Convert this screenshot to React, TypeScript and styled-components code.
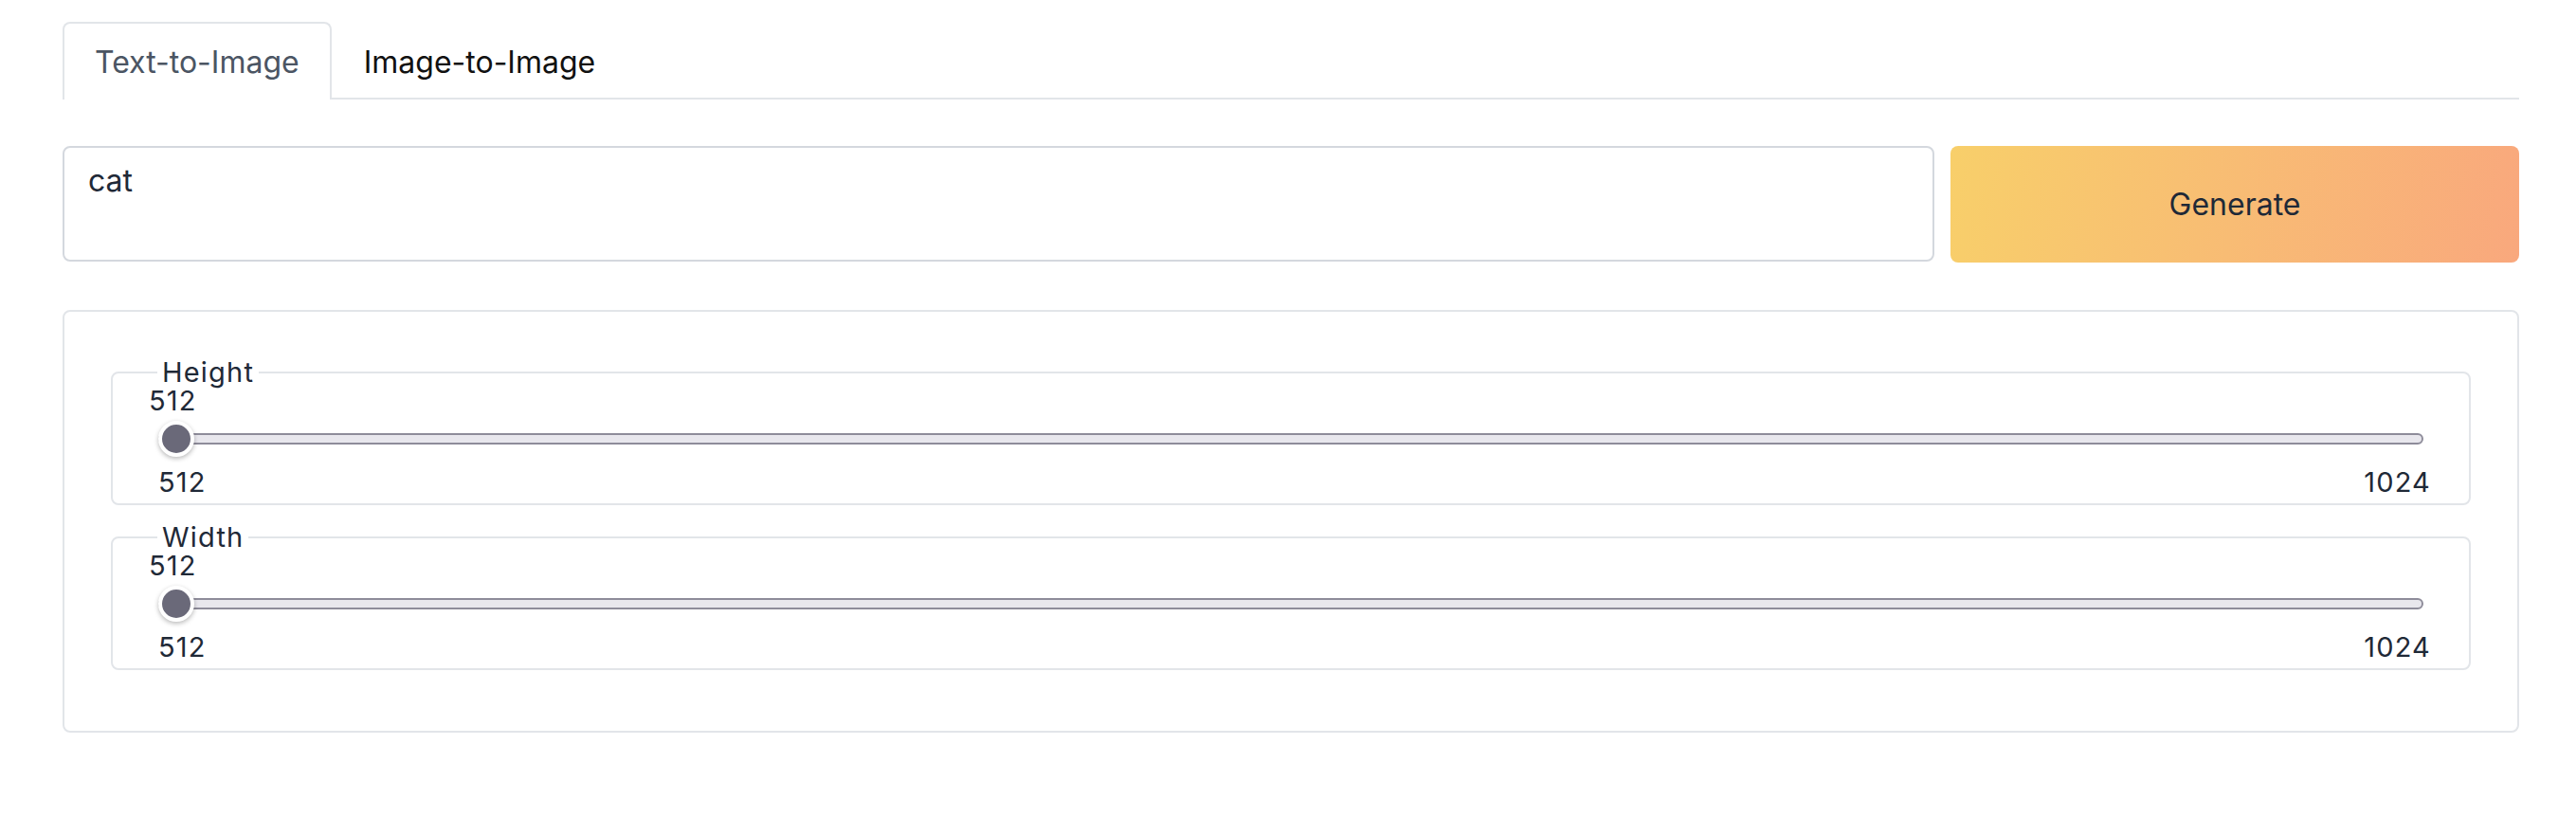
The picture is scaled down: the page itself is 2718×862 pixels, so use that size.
import React from "react";
import styled, { createGlobalStyle } from "styled-components";

const GlobalStyle = createGlobalStyle`
  html, body {
    margin: 0;
    padding: 0;
    background: #ffffff;
  }
  body {
    font-family: "Inter", "Noto Sans", "Liberation Sans", sans-serif;
    color: #1f2937;
  }
  * { box-sizing: border-box; }
`;

const Page = styled.div`
  padding: 23px 60px 0 66px;
`;

const TabBar = styled.div`
  display: flex;
  border-bottom: 2px solid #e2e5e9;
`;

const Tab = styled.button<{ $active?: boolean }>`
  height: 82px;
  margin-bottom: -2px;
  padding: 0 32px;
  border: 2px solid ${(p) => (p.$active ? "#e2e5e9" : "transparent")};
  border-bottom: none;
  border-radius: 8px 8px 0 0;
  background: ${(p) => (p.$active ? "#ffffff" : "transparent")};
  font-family: inherit;
  font-size: 32px;
  color: ${(p) => (p.$active ? "#4b5563" : "#111111")};
  cursor: pointer;
`;

const PromptRow = styled.div`
  display: flex;
  gap: 17px;
  margin-top: 49px;
`;

const Prompt = styled.textarea`
  flex: 1;
  height: 122px;
  padding: 11px 25px;
  border: 2px solid #d4d8de;
  border-radius: 8px;
  font-family: inherit;
  font-size: 32px;
  line-height: 48px;
  color: #1f2937;
  resize: none;
  outline: none;
`;

const GenerateButton = styled.button`
  width: 600px;
  height: 123px;
  border: none;
  border-radius: 8px;
  background: linear-gradient(100deg, #f8cf6a 0%, #f8bc74 50%, #f9a87d 100%);
  font-family: inherit;
  font-size: 32px;
  color: #1f2937;
  cursor: pointer;
`;

const Settings = styled.div`
  display: flex;
  flex-direction: column;
  gap: 17px;
  margin-top: 50px;
  padding: 47px 49px 64px;
  border: 2px solid #e2e5e9;
  border-radius: 8px;
`;

const Field = styled.fieldset`
  margin: 0;
  min-width: 0;
  padding: 0 48px 9px;
  border: 2px solid #e2e5e9;
  border-radius: 8px;
`;

const Legend = styled.legend`
  padding: 0 5px;
  margin-left: -1px;
  font-size: 29px;
  letter-spacing: 1.2px;
  line-height: 34px;
  color: #1f2937;
`;

const ValueRow = styled.div`
  position: relative;
  height: 26px;
`;

const ValueLabel = styled.span`
  position: absolute;
  top: 0;
  margin-left: -10px;
  font-size: 29px;
  letter-spacing: 1.2px;
  line-height: 26px;
  color: #1f2937;
`;

const TrackArea = styled.div`
  position: relative;
  display: flex;
  align-items: center;
  height: 38px;
  margin-top: 8px;
`;

const Track = styled.div`
  flex: 1;
  height: 12px;
  border: 2px solid #8e8c9a;
  border-radius: 6px;
  background: #e8e7ed;
`;

const Thumb = styled.div`
  position: absolute;
  top: 0;
  width: 38px;
  height: 38px;
  border: 4px solid #ffffff;
  border-radius: 50%;
  background: #6a6979;
  box-shadow: 0 2px 5px rgba(0, 0, 0, 0.28);
`;

const RangeLabels = styled.div`
  display: flex;
  justify-content: space-between;
  margin-top: 14px;
  margin-right: -8px;
  font-size: 29px;
  letter-spacing: 1.2px;
  line-height: 26px;
  color: #1f2937;
`;

type SliderProps = { label: string; value: number; min: number; max: number };

function Slider({ label, value, min, max }: SliderProps) {
  const pct = ((value - min) / (max - min)) * 100;
  return (
    <Field>
      <Legend>{label}</Legend>
      <ValueRow>
        <ValueLabel style={{ left: `${pct}%` }}>{value}</ValueLabel>
      </ValueRow>
      <TrackArea>
        <Track />
        <Thumb style={{ left: `calc(${pct}% - ${(pct / 100) * 38}px)` }} />
      </TrackArea>
      <RangeLabels>
        <span>{min}</span>
        <span>{max}</span>
      </RangeLabels>
    </Field>
  );
}

export default function App() {
  return (
    <>
      <GlobalStyle />
      <Page>
        <TabBar>
          <Tab $active>Text-to-Image</Tab>
          <Tab>Image-to-Image</Tab>
        </TabBar>
        <PromptRow>
          <Prompt defaultValue="cat" />
          <GenerateButton>Generate</GenerateButton>
        </PromptRow>
        <Settings>
          <Slider label="Height" value={512} min={512} max={1024} />
          <Slider label="Width" value={512} min={512} max={1024} />
        </Settings>
      </Page>
    </>
  );
}
